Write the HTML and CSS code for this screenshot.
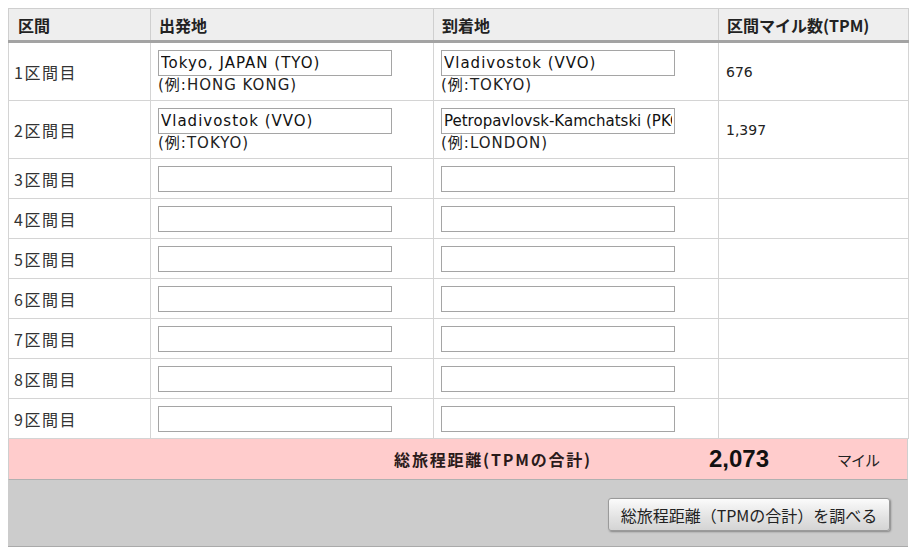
FILE: index.html
```html
<!DOCTYPE html>
<html lang="ja">
<head>
<meta charset="utf-8">
<title>TPM</title>
<link rel="stylesheet" href="styles.css">
</head>
<body>
<div class="wrap">
  <table class="tpm">
    <colgroup>
      <col class="c1"><col class="c2"><col class="c3"><col class="c4">
    </colgroup>
    <thead>
      <tr><th>区間</th><th>出発地</th><th>到着地</th><th>区間マイル数(TPM)</th></tr>
    </thead>
    <tbody>
      <tr class="tall">
        <td class="lbl">1区間目</td>
        <td><input class="fld" type="text" value="Tokyo, JAPAN (TYO)"><div class="hint">(例:HONG KONG)</div></td>
        <td><input class="fld" type="text" value="Vladivostok (VVO)"><div class="hint">(例:TOKYO)</div></td>
        <td class="mi">676</td>
      </tr>
      <tr class="tall">
        <td class="lbl">2区間目</td>
        <td><input class="fld" type="text" value="Vladivostok (VVO)"><div class="hint">(例:TOKYO)</div></td>
        <td><input class="fld fld-long" type="text" value="Petropavlovsk-Kamchatski (PKC)"><div class="hint">(例:LONDON)</div></td>
        <td class="mi">1,397</td>
      </tr>
      <tr><td class="lbl">3区間目</td><td><input class="fld" type="text"></td><td><input class="fld" type="text"></td><td></td></tr>
      <tr><td class="lbl">4区間目</td><td><input class="fld" type="text"></td><td><input class="fld" type="text"></td><td></td></tr>
      <tr><td class="lbl">5区間目</td><td><input class="fld" type="text"></td><td><input class="fld" type="text"></td><td></td></tr>
      <tr><td class="lbl">6区間目</td><td><input class="fld" type="text"></td><td><input class="fld" type="text"></td><td></td></tr>
      <tr><td class="lbl">7区間目</td><td><input class="fld" type="text"></td><td><input class="fld" type="text"></td><td></td></tr>
      <tr><td class="lbl">8区間目</td><td><input class="fld" type="text"></td><td><input class="fld" type="text"></td><td></td></tr>
      <tr><td class="lbl">9区間目</td><td><input class="fld" type="text"></td><td><input class="fld" type="text"></td><td></td></tr>
    </tbody>
  </table>
  <div class="total">
    <span class="total-label">総旅程距離(TPMの合計)</span>
    <span class="total-num">2,073</span>
    <span class="total-unit">マイル</span>
  </div>
  <div class="actions">
    <button class="btn" type="button">総旅程距離（TPMの合計）を調べる</button>
  </div>
</div>
</body>
</html>
```

FILE: styles.css
```css
html, body {
  margin: 0;
  padding: 0;
  background: #ffffff;
}
body {
  padding: 8px;
  font-family: "Noto Sans CJK JP", "Liberation Sans", sans-serif;
  color: #333333;
  font-size: 16px;
}
.wrap {
  width: 900px;
}
.tpm {
  width: 900px;
  border-collapse: collapse;
  table-layout: fixed;
  border: 1px solid #cfcfcf;
  border-bottom: none;
}
.c1 { width: 142px; }
.c2 { width: 283px; }
.c3 { width: 285px; }
.c4 { width: 190px; }
.tpm th {
  background: #eeeeee;
  text-align: left;
  font-weight: bold;
  color: #222222;
  font-size: 16px;
  line-height: 20px;
  height: 33px;
  padding: 0 0 0 8px;
  box-sizing: border-box;
  border-left: 1px solid #cfcfcf;
  border-bottom: 3px solid #a3a3a3;
  vertical-align: middle;
}
.tpm th:first-child {
  padding-left: 9px;
}
.tpm td {
  border: 1px solid #d4d4d4;
  height: 39px;
  padding: 0 0 0 7px;
  vertical-align: middle;
  font-size: 15px;
  line-height: 18px;
}
.tpm tr.tall td {
  height: 57px;
}
.tpm td.lbl {
  padding-left: 5px;
  font-size: 16px;
  letter-spacing: 1.5px;
}
.tpm td.mi {
  padding-left: 7px;
  font-family: "DejaVu Sans", sans-serif;
  font-size: 14px;
  color: #222222;
}
.fld {
  display: block;
  width: 234px;
  height: 26px;
  box-sizing: border-box;
  border: 1px solid #a5a5a5;
  padding: 0 2px;
  margin: 0;
  font-family: "DejaVu Sans", "Noto Sans CJK JP", sans-serif;
  font-size: 15px;
  letter-spacing: 1px;
  color: #111111;
  background: #ffffff;
  outline: none;
}
.fld-long {
  letter-spacing: 0;
}
.hint {
  font-family: "DejaVu Sans", "Noto Sans CJK JP", sans-serif;
  font-size: 15px;
  letter-spacing: 1px;
  line-height: 17px;
  margin-top: 1px;
  color: #222222;
}
.total {
  display: flex;
  align-items: center;
  height: 40px;
  background: #ffcccc;
  border-left: 1px solid #cfcfcf;
  border-right: 1px solid #cfcfcf;
  border-bottom: 1px solid #b0b0b0;
  padding-right: 28px;
  justify-content: flex-end;
}
.total-label {
  font-size: 16px;
  font-weight: bold;
  letter-spacing: 1.8px;
  color: #2a1a1a;
  margin-right: 117px;
}
.total-num {
  font-family: "Liberation Sans", sans-serif;
  font-weight: bold;
  font-size: 24px;
  color: #111111;
  margin-right: 68px;
}
.total-unit {
  font-size: 15px;
  letter-spacing: -1px;
  color: #222222;
}
.actions {
  display: flex;
  justify-content: flex-end;
  background: #cccccc;
  height: 67px;
  padding: 18px 18px 0 0;
  box-sizing: border-box;
  border-bottom: 1px solid #aaaaaa;
}
.btn {
  width: 282px;
  height: 33px;
  font-family: "Noto Sans CJK JP", sans-serif;
  font-size: 16px;
  color: #222222;
  background: linear-gradient(#fbfbfb, #e2e2e2 60%, #d4d4d4);
  border: 1px solid #9a9a9a;
  border-radius: 3px;
  box-shadow: 1px 1px 2px rgba(0,0,0,0.35);
  padding: 0;
  cursor: pointer;
}
```
